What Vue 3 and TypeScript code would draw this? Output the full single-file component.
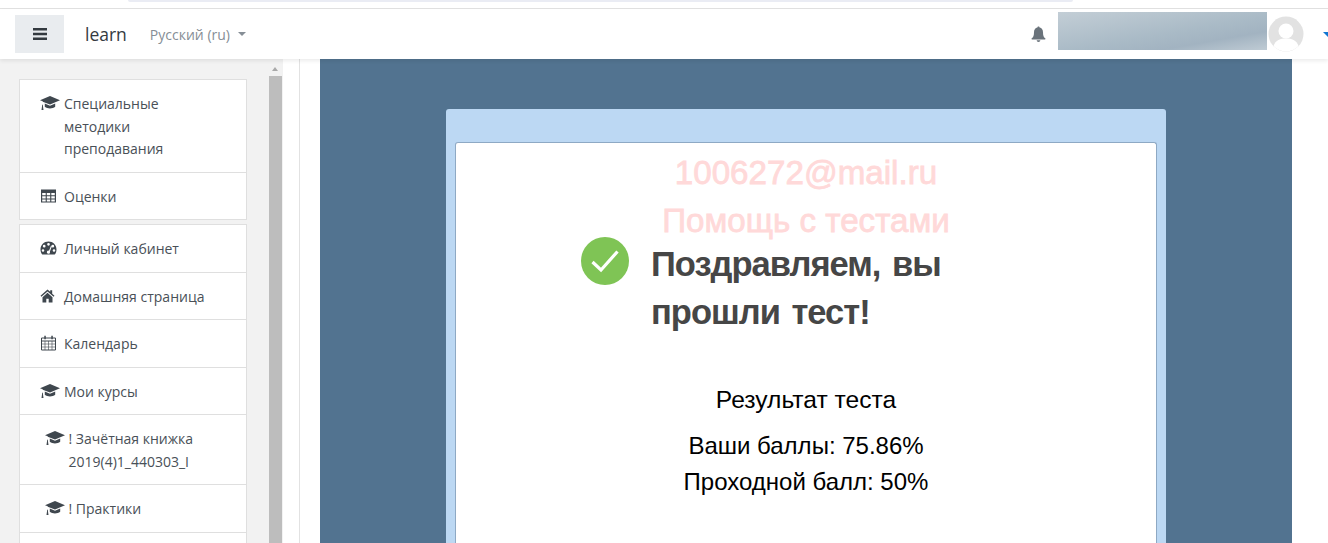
<template>
  <div class="page">
    <div class="browser-strip"><div class="address"></div></div>
    <header class="navbar">
      <button class="burger" aria-label="menu">
        <svg width="14" height="12" viewBox="0 0 14 12"><path d="M0 0h14v2.4H0zM0 4.8h14v2.4H0zM0 9.6h14V12H0z" fill="#343a40" /></svg>
      </button>
      <span class="brand">learn</span>
      <span class="lang">Русский ‎(ru)‎<i class="caret"></i></span>
      <div class="nav-right">
        <svg class="bell" width="15" height="16" viewBox="0 0 15 16"><path d="M7.5 0.5c.7 0 1.1.5 1.1 1.1 2.3.5 3.4 2.3 3.4 4.6 0 3.4.7 5 2.4 6.3.3.3.1.9-.4.9H1c-.5 0-.7-.6-.4-.9C2.300 11.200 3 9.600 3 6.200c0-2.300 1.100-4.100 3.400-4.600 0-.6.4-1.100 1.100-1.100zM5.700 14.200h3.600c0 1-.8 1.700-1.800 1.700s-1.800-.7-1.800-1.700z" fill="#6a737b" /></svg>
        <div class="blurred"></div>
        <svg class="avatar" width="36" height="36" viewBox="0 0 36 36">
          <circle cx="18" cy="18" r="17.500" fill="#e2e2e2" />
          <circle cx="18" cy="15" r="7.500" fill="#fff" />
          <path d="M5.500 30c2-6 7-7.500 12.500-7.500S28.500 24 30.500 30A17.500 17.500 0 0 1 18 35.500 17.500 17.500 0 0 1 5.500 30z" fill="#fff" />
        </svg>
        <i class="user-caret"></i>
      </div>
    </header>
    <div class="body">
      <aside class="sidebar">
        <div class="side-scroll">
          <div v-for="(group, g) in groups" :key="g" class="group">
            <a v-for="item in group" :key="item.label" class="item" :class="{ sub: item.sub }">
              <svg class="icon" viewBox="0 0 20 16" width="20" height="16">
                <template v-if="item.icon === 'cap'">
                  <path d="M10 1 0 5.200l2.700 1.100v3.200c-.5.300-.7.700-.6 1.200L1.500 15h2l-.6-4.300c.2-.3.200-.8-.2-1.100V6.700L10 9.600l10-4.400z" fill="#3f474e" />
                  <path d="M4.800 8.500v3.300c1.300 1 3.300 1.600 5.200 1.600s3.900-.6 5.200-1.600V8.500L10 10.800z" fill="#3f474e" />
                </template>
                <template v-else-if="item.icon === 'table'">
                  <path fill-rule="evenodd" d="M1 1.500h15v13H1zM2.200 5v2.200h3.500V5zm4.600 0v2.200h3.400V5zm4.500 0v2.200h3.500V5zM2.200 8.200v2.200h3.500V8.200zm4.600 0v2.200h3.400V8.200zm4.500 0v2.200h3.500V8.200zM2.200 11.400v2h3.500v-2zm4.600 0v2h3.400v-2zm4.500 0v2h3.500v-2z" fill="#3f474e" />
                </template>
                <template v-else-if="item.icon === 'gauge'">
                  <path fill-rule="evenodd" d="M8.500 1.500C4 1.500.500 5 .500 9.500c0 1.800.6 3.400 1.500 4.700.2.200.4.300.7.300h11.600c.3 0 .5-.1.700-.3 1-1.300 1.500-2.900 1.500-4.700 0-4.500-3.500-8-8-8zM8.500 3a1.300 1.300 0 1 1 0 2.700 1.300 1.300 0 0 1 0-2.700zM4.200 4.800a1.300 1.300 0 1 1 0 2.700 1.300 1.300 0 0 1 0-2.700zm8.600 0a1.300 1.300 0 1 1 0 2.700 1.300 1.300 0 0 1 0-2.700zM3 9.200a1.300 1.300 0 1 1 0 2.600 1.300 1.300 0 0 1 0-2.600zm11 0a1.300 1.300 0 1 1 0 2.600 1.300 1.300 0 0 1 0-2.600zM11 5.800l.9.4-2 5.400a1.600 1.600 0 1 1-2.900-.1 1.600 1.600 0 0 1 2-.8z" fill="#3f474e" />
                </template>
                <template v-else-if="item.icon === 'home'">
                  <path d="M7.500 1.500 .500 7.800l.9 1L7.500 3.400l6.100 5.400.9-1-2.300-2.100V2.200h-2v1.600zM2.500 9.200V14.500h3.800v-3.800h2.400v3.800h3.800V9.200L7.500 4.800z" fill="#3f474e" />
                </template>
                <template v-else>
                  <path d="M1.500 3h14v12h-14zM1.500 6h14" fill="none" stroke="#3f474e" stroke-width="1" />
                  <path d="M1.500 9h14M1.500 12h14M5 6v9M8.500 6v9M12 6v9" fill="none" stroke="#3f474e" stroke-width=".6" />
                  <path d="M4.300 .8h1.500v3.500H4.300zM11.300 .8h1.500v3.500h-1.500z" fill="#3f474e" />
                </template>
              </svg>
              <span class="label">{{ item.label }}</span>
            </a>
            <div v-if="g === groups.length - 1" class="rest"></div>
          </div>
        </div>
        <div class="scrollbar"><i class="arrow"></i><div class="thumb"></div></div>
      </aside>
      <div class="gutter"></div>
      <main class="main">
        <section class="panel">
          <div class="outer-card">
            <div class="inner-card">
              <p class="mark first">1006272@mail.ru</p>
              <p class="mark">Помощь с тестами</p>
              <div class="hero">
                <svg class="check" width="48" height="48" viewBox="0 0 48 48">
                  <circle cx="24" cy="24" r="24" fill="#7fc455" />
                  <path d="M11.500 25 20 33 36.500 14.500" fill="none" stroke="#fff" stroke-width="3.200" />
                </svg>
                <h1>Поздравляем, вы прошли тест!</h1>
              </div>
              <h2>Результат теста</h2>
              <p class="score">Ваши баллы: 75.86%</p>
              <p class="score">Проходной балл: 50%</p>
            </div>
          </div>
        </section>
      </main>
    </div>
  </div>
</template>

<script setup lang="ts">
interface NavItem {
  label: string;
  icon: "cap" | "table" | "gauge" | "home" | "calendar";
  sub?: boolean;
}

const groups: NavItem[][] = [
  [
    { label: "Специальные методики преподавания", icon: "cap" },
    { label: "Оценки", icon: "table" },
  ],
  [
    { label: "Личный кабинет", icon: "gauge" },
    { label: "Домашняя страница", icon: "home" },
    { label: "Календарь", icon: "calendar" },
    { label: "Мои курсы", icon: "cap" },
    { label: "! Зачётная книжка 2019(4)1_440303_I", icon: "cap", sub: true },
    { label: "! Практики", icon: "cap", sub: true },
  ],
];
</script>

<style>
html,
body {
  margin: 0;
  overflow: hidden;
  background: #fff;
}
</style>

<style scoped>
.page {
  display: flex;
  flex-direction: column;
  height: 543px;
  overflow: hidden;
  font-family: "Open Sans", sans-serif;
}

.browser-strip {
  height: 8px;
  flex: none;
  background: #fff;
  border-bottom: 1px solid #e2e2e2;
  overflow: hidden;
}

.address {
  width: 945px;
  height: 2px;
  margin-left: 128px;
  background: #eaecf4;
  border-radius: 0 0 6px 6px;
}

.navbar {
  position: relative;
  z-index: 2;
  flex: none;
  display: flex;
  align-items: center;
  height: 50px;
  padding-left: 15px;
  background: #fff;
  box-shadow: 0 2px 4px rgba(0, 0, 0, 0.08);
}

.burger {
  display: flex;
  align-items: center;
  justify-content: center;
  width: 49px;
  height: 38px;
  padding: 0;
  border: none;
  background: #e9ecef;
}

.brand {
  margin-left: 21px;
  font-size: 17.500px;
  color: #343a40;
}

.lang {
  display: flex;
  align-items: center;
  margin-left: 23px;
  font-size: 14px;
  color: #868e96;
}

.caret {
  width: 0;
  height: 0;
  margin-left: 8px;
  border-top: 4px solid #868e96;
  border-left: 4px solid transparent;
  border-right: 4px solid transparent;
}

.nav-right {
  display: flex;
  align-items: center;
  margin-left: auto;
}

.bell {
  margin-right: 12px;
}

.blurred {
  width: 209px;
  height: 38px;
  margin-bottom: 6px;
  background: linear-gradient(170deg, #c3ced6 0%, #a9bac6 55%, #a2b3c1 75%, #bfcbd4 100%);
}

.avatar {
  margin-left: 1px;
}

.user-caret {
  width: 0;
  height: 0;
  margin-left: 19px;
  margin-right: -5px;
  border-top: 5px solid #1177d1;
  border-left: 5px solid transparent;
  border-right: 5px solid transparent;
}

.body {
  flex: 1;
  display: flex;
  min-height: 0;
}

.sidebar {
  flex: none;
  display: flex;
  width: 283px;
  background: #f2f2f2;
}

.side-scroll {
  width: 228px;
  margin-left: 19px;
  padding-top: 20px;
}

.group {
  margin-bottom: 4px;
  background: #fff;
  border: 1px solid #dfdfdf;
}

.item {
  display: flex;
  align-items: flex-start;
  padding: 13px 20px 11px;
  font-size: 14px;
  line-height: 22.500px;
  color: #495057;
}

.item + .item,
.rest {
  border-top: 1px solid #dfdfdf;
}

.rest {
  height: 48px;
}

.item.sub {
  padding-left: 24.500px;
}

.icon {
  flex: none;
  margin: 2px 4px 0 0;
}

.scrollbar {
  position: relative;
  width: 13px;
  margin-left: 22px;
  margin-top: 17px;
}

.arrow {
  position: absolute;
  top: -9px;
  left: 3px;
  width: 0;
  height: 0;
  border-bottom: 4px solid #a9a9a9;
  border-left: 3.500px solid transparent;
  border-right: 3.500px solid transparent;
}

.thumb {
  height: 100%;
  background: #bdbdbd;
}

.gutter {
  flex: none;
  width: 16px;
  background: #fff;
  border-right: 1px solid #e2e2e2;
}

.main {
  flex: 1;
  min-width: 0;
  padding: 0 36px 0 20px;
  background: #fff;
}

.panel {
  display: flex;
  justify-content: center;
  height: 100%;
  padding-top: 50px;
  box-sizing: border-box;
  background: #527390;
}

.outer-card {
  width: 720px;
  padding: 33px 9px 0;
  box-sizing: border-box;
  background: #bcd8f3;
  border-radius: 3px 3px 0 0;
}

.inner-card {
  display: flex;
  flex-direction: column;
  align-items: center;
  height: 100%;
  box-sizing: border-box;
  padding-top: 12px;
  background: #fff;
  border: 1px solid #8ea9c4;
  border-bottom: none;
  border-radius: 3px 3px 0 0;
  font-family: "Liberation Sans", Arial, sans-serif;
  color: #000;
}

.mark {
  margin: 0;
  font-size: 33.200px;
  font-weight: 400;
  line-height: 36px;
  color: #ffd9d9;
  -webkit-text-stroke: 0.8px #ffd9d9;
}

.mark.first {
  margin-bottom: 12px;
}

.hero {
  display: flex;
  align-items: flex-start;
  width: 370px;
  margin-top: -2px;
  margin-left: -80px;
}

.check {
  flex: none;
  margin-right: 22px;
}

h1 {
  flex: none;
  width: 300px;
  margin: 3px 0 0;
  font-size: 34.500px;
  line-height: 48px;
  font-weight: 700;
  letter-spacing: -1px;
  word-spacing: 3px;
  color: #464646;
}

h2 {
  margin: 48px 0 0;
  font-size: 24.600px;
  line-height: 32px;
  font-weight: 400;
}

.score {
  margin: 0;
  font-size: 24px;
  line-height: 36px;
}

h2 + .score {
  margin-top: 12px;
}
</style>
